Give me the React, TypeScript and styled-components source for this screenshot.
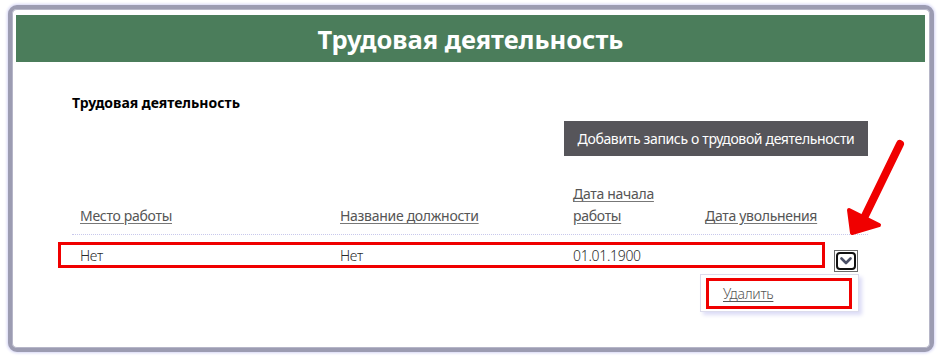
import React from 'react';
import styled, { createGlobalStyle } from 'styled-components';

const GlobalStyle = createGlobalStyle`
  html, body {
    margin: 0;
    padding: 0;
    background: #ffffff;
  }
  body {
    font-family: "Noto Sans", "Open Sans", sans-serif;
  }
`;

const columns = [
  { key: 'place', title: 'Место работы', width: 260 },
  { key: 'position', title: 'Название должности', width: 233 },
  { key: 'start', title: 'Дата начала работы', width: 132 },
  { key: 'end', title: 'Дата увольнения', width: 137 },
];

const rows = [{ place: 'Нет', position: 'Нет', start: '01.01.1900', end: '' }];

const ChevronDown = () => (
  <svg width="12" height="8" viewBox="0 0 12 8">
    <path d="M1.5 1.5 L6 6 L10.5 1.5" fill="none" stroke="#4a4f66" strokeWidth="2.6" strokeLinecap="round" strokeLinejoin="round" />
  </svg>
);

const RedArrow = () => (
  <ArrowSvg width="70" height="110" viewBox="0 0 70 110">
    <path d="M58 10 L22 84" stroke="#f00000" strokeWidth="8" strokeLinecap="round" />
    <path d="M10 99 L7 76 L37 91 Z" fill="#f00000" stroke="#f00000" strokeWidth="4" strokeLinejoin="round" />
  </ArrowSvg>
);

export default function App() {
  return (
    <>
      <GlobalStyle />
      <Page>
        <Card>
          <Header>Трудовая деятельность</Header>
          <Content>
            <SectionTitle>Трудовая деятельность</SectionTitle>
            <Toolbar>
              <AddButton>Добавить запись о трудовой деятельности</AddButton>
            </Toolbar>
            <Table>
              <HeadRow>
                {columns.map((c) => (
                  <HeadCell key={c.key} $width={c.width}>
                    <HeadLink>{c.title}</HeadLink>
                  </HeadCell>
                ))}
              </HeadRow>
              {rows.map((r, i) => (
                <DataRow key={i}>
                  <RowHighlight />
                  {columns.map((c) => (
                    <DataCell key={c.key} $width={c.width}>
                      {r[c.key as keyof typeof r]}
                    </DataCell>
                  ))}
                  <ActionCell>
                    <ToggleButton>
                      <ToggleInner>
                        <ChevronDown />
                      </ToggleInner>
                    </ToggleButton>
                    <Menu>
                      <MenuItem>
                        <MenuLink>Удалить</MenuLink>
                      </MenuItem>
                    </Menu>
                  </ActionCell>
                </DataRow>
              ))}
            </Table>
          </Content>
          <RedArrow />
        </Card>
      </Page>
    </>
  );
}

const Page = styled.div`
  width: 942px;
  height: 358px;
  padding: 5px 8px 0 8px;
  box-sizing: border-box;
`;

const Card = styled.div`
  position: relative;
  width: 926px;
  height: 347px;
  box-sizing: border-box;
  border: 4px solid #9c9cb2;
  border-radius: 9px;
  background: #ffffff;
  padding: 6px 5px 0 4px;
  box-shadow: 0 0 3px 1px #d4d4f4, inset 0 0 0 1px #b6b6c8;
`;

const Header = styled.div`
  height: 47px;
  background: #4b7d5b;
  color: #ffffff;
  display: flex;
  align-items: center;
  justify-content: center;
  font-size: 25.5px;
  font-weight: 700;
`;

const Content = styled.div`
  padding: 32px 57px 0 56px;
`;

const SectionTitle = styled.div`
  font-size: 14px;
  font-weight: 700;
  color: #000000;
  line-height: 18px;
`;

const Toolbar = styled.div`
  display: flex;
  justify-content: flex-end;
  margin-top: 9px;
`;

const AddButton = styled.button`
  height: 35px;
  width: 304px;
  border: none;
  background: #56555a;
  color: #ffffff;
  font-family: inherit;
  font-size: 14px;
  letter-spacing: -0.35px;
  padding: 0;
`;

const Table = styled.div`
  margin-top: 27px;
  display: flex;
  flex-direction: column;
`;

const HeadRow = styled.div`
  display: flex;
  align-items: flex-end;
  border-bottom: 1px dotted #c8c8ec;
  padding-bottom: 7px;
`;

const HeadCell = styled.div<{ $width: number }>`
  width: ${(p) => p.$width}px;
  box-sizing: border-box;
  padding: 0 6px 0 8px;
  font-size: 14px;
  line-height: 22px;
  letter-spacing: -0.3px;
`;

const HeadLink = styled.a`
  color: #555555;
  text-decoration: underline;
  text-decoration-color: #777777;
  text-underline-offset: 2px;
`;

const DataRow = styled.div`
  position: relative;
  display: flex;
  align-items: center;
  height: 38px;
`;

const RowHighlight = styled.div`
  position: absolute;
  left: -14px;
  top: 7px;
  width: 767px;
  height: 26px;
  box-sizing: border-box;
  border: 3px solid #f00000;
  pointer-events: none;
`;

const DataCell = styled.div<{ $width: number }>`
  width: ${(p) => p.$width}px;
  box-sizing: border-box;
  padding: 0 8px;
  font-size: 14px;
  font-weight: 300;
  color: #2a2a2a;
  letter-spacing: -0.3px;
  margin-top: 3px;
`;

const ActionCell = styled.div`
  position: relative;
  margin-top: 13px;
`;

const ToggleButton = styled.div`
  width: 24px;
  height: 22px;
  box-sizing: border-box;
  border: 1px solid #6a6a6a;
  background: #ffffff;
  display: flex;
  align-items: center;
  justify-content: center;
`;

const ToggleInner = styled.div`
  width: 20px;
  height: 18px;
  box-sizing: border-box;
  border: 2px solid #111111;
  border-radius: 4px;
  display: flex;
  align-items: center;
  justify-content: center;
`;

const Menu = styled.div`
  position: absolute;
  top: 24px;
  right: -1px;
  width: 159px;
  height: 38px;
  box-sizing: border-box;
  background: #ffffff;
  border: 1px solid #dcdcec;
  box-shadow: 3px 3px 4px #dcdcf6;
  padding: 3px 6px 3px 5px;
`;

const MenuItem = styled.div`
  height: 31px;
  box-sizing: border-box;
  border: 3px solid #f00000;
  display: flex;
  align-items: center;
  padding-left: 14px;
`;

const MenuLink = styled.a`
  font-size: 14px;
  font-weight: 300;
  color: #555555;
  text-decoration: underline;
  letter-spacing: -0.3px;
  text-underline-offset: 2px;
`;

const ArrowSvg = styled.svg`
  position: absolute;
  left: 830px;
  top: 125px;
  pointer-events: none;
`;
